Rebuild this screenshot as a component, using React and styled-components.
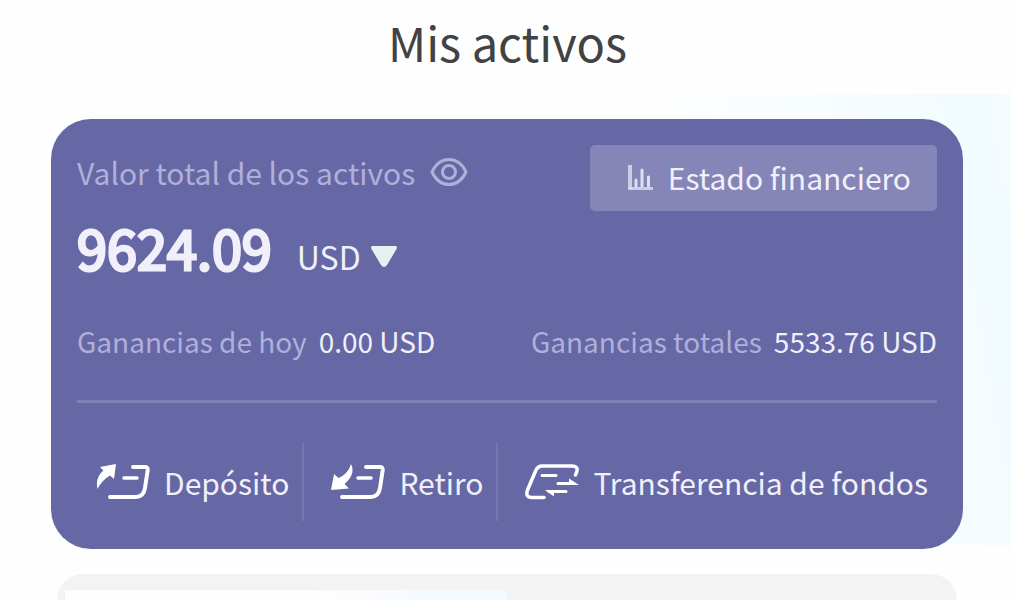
import React from "react";
import styled, { createGlobalStyle } from "styled-components";

const GlobalStyle = createGlobalStyle`
  * {
    box-sizing: border-box;
  }
  body {
    margin: 0;
    background: #fefefe;
    font-family: "Noto Sans CJK SC", "Noto Sans", sans-serif;
  }
  h1, h2, p, dl, dt, dd {
    margin: 0;
    font-weight: 400;
  }
  button, select {
    font: inherit;
    color: inherit;
    border: 0;
    background: none;
    padding: 0;
    cursor: pointer;
  }
  svg {
    display: block;
    flex-shrink: 0;
  }
`;

const Page = styled.div`
  display: flex;
  flex-direction: column;
  min-height: 100vh;
`;

const Header = styled.header`
  display: flex;
  justify-content: center;
  height: 94px;
  padding: 6px 0 0 4px;
`;

const Title = styled.h1`
  color: #424242;
  font-size: 47px;
  line-height: 72px;
`;

const AssetsSection = styled.main`
  padding: 25px 48px 0 51px;
  background: linear-gradient(80deg, #fefefe 66%, #f7fdff 84%, #f2fbff 96%, #f4fcff 100%)
    no-repeat 0 0 / 100% 451px;
`;

const AssetsCard = styled.section`
  padding: 26px 26px 28px;
  border-radius: 40px;
  background: #6667a5;
  color: #f0effa;
`;

const CardTop = styled.div`
  display: flex;
  justify-content: space-between;
  height: 66px;
`;

const TotalLabel = styled.div`
  display: flex;
  align-items: center;
  gap: 15px;
  height: 54px;
  color: #b0afd9;
`;

const TotalTitle = styled.h2`
  font-size: 30px;
  line-height: 48px;
`;

const StatementButton = styled.button`
  display: flex;
  align-items: center;
  gap: 14px;
  height: 66px;
  padding: 0 26px 2px 37px;
  border-radius: 5px;
  background: #8685b7;
  font-size: 30px;
  line-height: 48px;
`;

const Balance = styled.div`
  display: flex;
  align-items: baseline;
  gap: 25px;
  height: 80px;
`;

const Amount = styled.p`
  font-size: 54px;
  line-height: 72px;
  -webkit-text-stroke: 3px currentColor;
`;

const Currency = styled.label`
  display: flex;
  align-items: center;
  gap: 9px;
  font-size: 32px;
  line-height: 48px;
`;

const CurrencySelect = styled.select`
  appearance: none;
  line-height: 48px;
`;

const Earnings = styled.dl`
  display: flex;
  justify-content: space-between;
  margin-top: 26px;
  padding-bottom: 35px;
  border-bottom: 3px solid #8080b6;
  font-size: 28px;
  line-height: 48px;
`;

const Earning = styled.div`
  display: flex;
  gap: 12px;

  dt {
    color: #b0afd9;
  }
`;

const Actions = styled.nav`
  display: flex;
  height: 78px;
  margin-top: 40px;
`;

const ActionButton = styled.button`
  display: flex;
  align-items: center;
  gap: 14px;
  padding: 0 13px 0 27px;
  font-size: 30px;
  line-height: 48px;
  white-space: nowrap;

  & + & {
    border-left: 2px solid #7676b0;
  }
  &:first-child {
    padding-left: 19px;
  }
  &:last-child {
    padding-right: 0;
  }
`;

const NextPanel = styled.section`
  flex: 1;
  min-height: 26px;
  margin: 25px 54px 0 57px;
  padding: 16px 8px 0;
  border-radius: 36px 36px 0 0;
  background: #f3f3f3;
`;

const ActiveTab = styled.div`
  width: 50%;
  height: 10px;
  background: linear-gradient(90deg, #fefefe 55%, #f4f9ff 85%);
`;

const EyeIcon = () => (
  <svg width="38" height="30" viewBox="0 0 38 30" fill="none" stroke="#b0afd9" strokeWidth="3">
    <path d="M2 15C6 6.500 12 2.500 19 2.500S32 6.500 36 15C32 23.500 26 27.500 19 27.500S6 23.500 2 15Z" />
    <circle cx="19" cy="15" r="6.500" />
  </svg>
);

const ChartIcon = () => (
  <svg width="27" height="28" viewBox="0 0 27 28" fill="none" stroke="#e0dff0">
    <path d="M3 2V26" strokeWidth="4" opacity="0.8" />
    <path d="M1.500 25.500H26" strokeWidth="3" opacity="0.8" />
    <path d="M9 17V23M15 7V23M21.500 14V23" strokeWidth="3" strokeLinecap="round" />
  </svg>
);

const ArrowDown = () => (
  <svg width="28" height="24" viewBox="0 0 28 24" fill="#e6f2f1">
    <path d="M3 2H25Q28 2 26.500 5L17 21Q14 25 11 21L1.500 5Q0 2 3 2Z" />
  </svg>
);

const DepositIcon = () => (
  <svg width="54" height="36" viewBox="0 0 54 36" fill="none" stroke="#fff" strokeWidth="4" strokeLinecap="round" strokeLinejoin="round">
    <path d="M37 3H49Q52 3 51.700 6L49 24Q47.500 33 40 33H14" />
    <path d="M28 14H41" strokeWidth="3.500" />
    <path d="M20 0L18 15L14 11.500Q6 16 1.500 25Q-1 13 7.500 6.500L4 3Z" fill="#fff" stroke="none" />
  </svg>
);

const WithdrawIcon = () => (
  <svg width="54" height="36" viewBox="0 0 54 36" fill="none" stroke="#fff" strokeWidth="4" strokeLinecap="round" strokeLinejoin="round">
    <path d="M35 3H49Q52 3 51.700 6L49 24Q47.500 33 40 33H11" />
    <path d="M27 14H40" strokeWidth="3.500" />
    <path d="M0 26L3 10L7.500 14Q17 10 20 0Q25 10 13.500 20L18 24.500Z" fill="#fff" stroke="none" />
  </svg>
);

const TransferIcon = () => (
  <svg width="54" height="36" viewBox="0 0 54 36" fill="none" stroke="#fff" strokeWidth="3.500" strokeLinecap="round" strokeLinejoin="round">
    <path d="M19 33.500H7Q0 33.500 2.500 26L11 6Q13 2 17 2H47Q53 2 52 7L50.500 11" />
    <path d="M17 11.500H31M33 19.500H48M24 27.500H41" strokeWidth="3" />
    <path d="M44 14.500L54 21H44ZM20 26H29V32.500Z" fill="#fff" stroke="none" />
  </svg>
);

const actions = [
  { label: "Depósito", Icon: DepositIcon },
  { label: "Retiro", Icon: WithdrawIcon },
  { label: "Transferencia de fondos", Icon: TransferIcon },
];

function App() {
  return (
    <>
      <GlobalStyle />
      <Page>
        <Header>
          <Title>Mis activos</Title>
        </Header>
        <AssetsSection>
          <AssetsCard>
            <CardTop>
              <TotalLabel>
                <TotalTitle>Valor total de los activos</TotalTitle>
                <button type="button" aria-label="Ocultar valor">
                  <EyeIcon />
                </button>
              </TotalLabel>
              <StatementButton type="button">
                <ChartIcon />
                Estado financiero
              </StatementButton>
            </CardTop>
            <Balance>
              <Amount>9624.09</Amount>
              <Currency>
                <CurrencySelect aria-label="Moneda">
                  <option>USD</option>
                </CurrencySelect>
                <ArrowDown />
              </Currency>
            </Balance>
            <Earnings>
              <Earning>
                <dt>Ganancias de hoy</dt>
                <dd>0.00 USD</dd>
              </Earning>
              <Earning>
                <dt>Ganancias totales</dt>
                <dd>5533.76 USD</dd>
              </Earning>
            </Earnings>
            <Actions>
              {actions.map(({ label, Icon }) => (
                <ActionButton type="button" key={label}>
                  <Icon />
                  {label}
                </ActionButton>
              ))}
            </Actions>
          </AssetsCard>
        </AssetsSection>
        <NextPanel>
          <ActiveTab />
        </NextPanel>
      </Page>
    </>
  );
}

export default App;
